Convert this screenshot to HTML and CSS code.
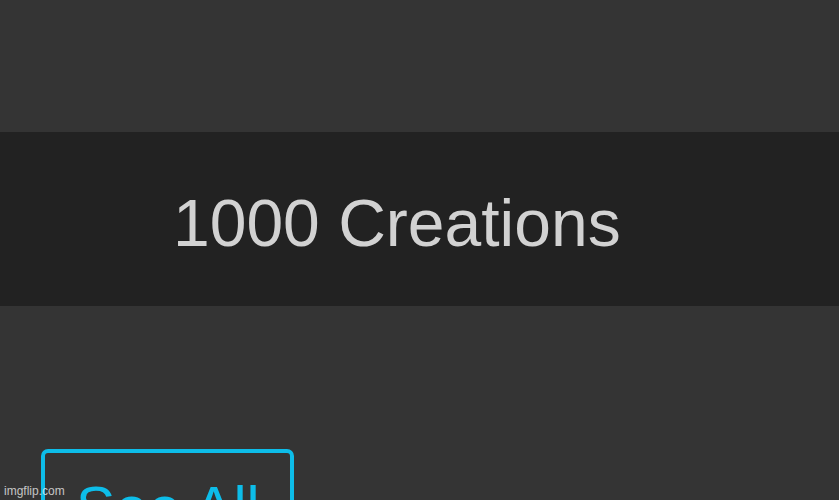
FILE: index.html
```html
<!DOCTYPE html>
<html>
<head>
<meta charset="utf-8">
<link rel="stylesheet" href="styles.css">
</head>
<body>
<div class="page">
  <div class="top"></div>
  <div class="band"><span class="count">1000 Creations</span></div>
  <div class="actions">
    <div class="see-all">See All</div>
  </div>
  <div class="watermark">imgflip.com</div>
</div>
</body>
</html>
```
FILE: styles.css
```css
html, body {
  margin: 0;
  padding: 0;
  background: #343434;
  overflow: hidden;
}
.page {
  position: relative;
  width: 839px;
  height: 500px;
  overflow: hidden;
  background: #343434;
  font-family: "Liberation Sans", Arial, sans-serif;
}
.top {
  height: 132px;
}
.band {
  background: #222222;
  height: 174px;
  box-sizing: border-box;
  padding: 53px 0 0 173px;
}
.count {
  display: block;
  font-size: 66px;
  line-height: 77px;
  color: #d2d2d2;
  white-space: nowrap;
}
.actions {
  padding: 143px 0 0 41px;
}
.see-all {
  width: 253px;
  height: 120px;
  box-sizing: border-box;
  border: 4px solid #0dbde9;
  border-radius: 7px;
  padding: 22px 0 0 31px;
  font-size: 59px;
  line-height: 66px;
  color: #0dbde9;
  white-space: nowrap;
}
.watermark {
  position: absolute;
  left: 4px;
  bottom: 2px;
  font-size: 12px;
  line-height: 14px;
  color: rgba(235, 235, 235, 0.8);
  font-family: "Liberation Sans", Arial, sans-serif;
}
```
